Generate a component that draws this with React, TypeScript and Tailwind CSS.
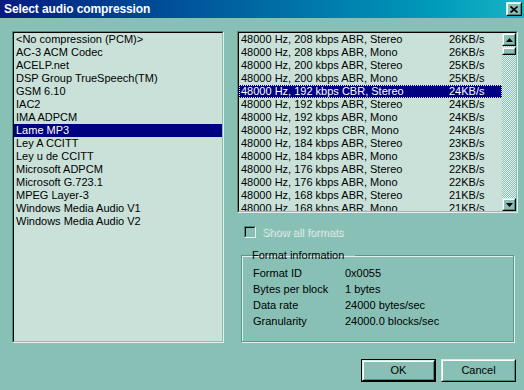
import React from "react";

const codecs = [
  "<No compression (PCM)>",
  "AC-3 ACM Codec",
  "ACELP.net",
  "DSP Group TrueSpeech(TM)",
  "GSM 6.10",
  "IAC2",
  "IMA ADPCM",
  "Lame MP3",
  "Ley A CCITT",
  "Ley u de CCITT",
  "Microsoft ADPCM",
  "Microsoft G.723.1",
  "MPEG Layer-3",
  "Windows Media Audio V1",
  "Windows Media Audio V2",
];

const formats = [
  ["48000 Hz, 208 kbps ABR, Stereo", "26KB/s"],
  ["48000 Hz, 208 kbps ABR, Mono", "26KB/s"],
  ["48000 Hz, 200 kbps ABR, Stereo", "25KB/s"],
  ["48000 Hz, 200 kbps ABR, Mono", "25KB/s"],
  ["48000 Hz, 192 kbps CBR, Stereo", "24KB/s"],
  ["48000 Hz, 192 kbps ABR, Stereo", "24KB/s"],
  ["48000 Hz, 192 kbps ABR, Mono", "24KB/s"],
  ["48000 Hz, 192 kbps CBR, Mono", "24KB/s"],
  ["48000 Hz, 184 kbps ABR, Stereo", "23KB/s"],
  ["48000 Hz, 184 kbps ABR, Mono", "23KB/s"],
  ["48000 Hz, 176 kbps ABR, Stereo", "22KB/s"],
  ["48000 Hz, 176 kbps ABR, Mono", "22KB/s"],
  ["48000 Hz, 168 kbps ABR, Stereo", "21KB/s"],
  ["48000 Hz, 168 kbps ABR, Mono", "21KB/s"],
];

const info = [
  ["Format ID", "0x0055"],
  ["Bytes per block", "1 bytes"],
  ["Data rate", "24000 bytes/sec"],
  ["Granularity", "24000.0 blocks/sec"],
];

// raised 3d edge, win9x style
const Raised = ({ className = "", children }: { className?: string; children?: React.ReactNode }) => (
  <div className={"border border-t-[#d9ece7] border-l-[#d9ece7] border-b-black border-r-black " + className}>
    <div className="w-full h-full border border-t-white border-l-white border-b-[#4f8b81] border-r-[#4f8b81] flex items-center justify-center">
      {children}
    </div>
  </div>
);

const Arrow = ({ down }: { down?: boolean }) => (
  <svg width="7" height="4" viewBox="0 0 7 4">
    <polygon points={down ? "0,0 7,0 3.5,4" : "0,4 7,4 3.5,0"} fill="black" />
  </svg>
);

export default function App() {
  return (
    <div className="w-[524px] h-[390px] overflow-hidden bg-[#88c0b6] text-black text-[11px] font-['Liberation_Sans',Arial,sans-serif] flex flex-col">
      {/* title bar */}
      <div className="h-[18px] flex items-center justify-between pl-[4px] pr-[2px] bg-linear-to-r from-[#081880] to-[#17b4c4]">
        <span className="text-white font-bold text-[12px] tracking-[-0.1px]">Select audio compression</span>
        <Raised className="w-[16px] h-[14px] bg-[#88c0b6]">
          <svg width="8" height="7" viewBox="0 0 8 7">
            <path d="M0.5 0.5 L7.5 6.5 M7.5 0.5 L0.5 6.5" stroke="black" strokeWidth="1.6" />
          </svg>
        </Raised>
      </div>

      <div className="flex pt-[13px] pl-[12px]">
        {/* codec list */}
        <div className="w-[212px] h-[312px] border border-t-[#4f8b81] border-l-[#4f8b81] border-b-[#e2f0ec] border-r-[#e2f0ec]">
          <div className="w-full h-full border border-t-black border-l-black border-b-[#88c0b6] border-r-[#88c0b6] bg-[#c9e1d9] overflow-hidden">
            {codecs.map((c) => (
              <div
                key={c}
                className={
                  "h-[13px] leading-[13px] pl-[2px] whitespace-nowrap " +
                  (c === "Lame MP3" ? "bg-[#000080] text-white" : "")
                }
              >
                {c}
              </div>
            ))}
          </div>
        </div>

        <div className="ml-[13px] w-[281px] flex flex-col">
          {/* format list */}
          <div className="h-[182px] border border-t-[#4f8b81] border-l-[#4f8b81] border-b-[#e2f0ec] border-r-[#e2f0ec]">
            <div className="w-full h-full border border-t-black border-l-black border-b-[#88c0b6] border-r-[#88c0b6] bg-[#c9e1d9] flex overflow-hidden">
              <div className="flex-1 overflow-hidden">
                {formats.map(([f, r], i) => (
                  <div
                    key={f}
                    className={
                      "h-[13px] leading-[11px] flex whitespace-nowrap border " +
                      (i === 4
                        ? "bg-[#000080] text-white border-dotted border-[#f0f080]"
                        : "border-transparent")
                    }
                  >
                    <span className="w-[209px] pl-[1px]">{f}</span>
                    <span>{r}</span>
                  </div>
                ))}
              </div>
              <div className="w-[14px] flex flex-col bg-[repeating-conic-gradient(#e4f2ee_0_25%,#88c0b6_0_50%)] bg-[length:2px_2px]">
                <Raised className="h-[13px] bg-[#88c0b6]">
                  <Arrow />
                </Raised>
                <Raised className="h-[8px] mt-[1px] bg-[#88c0b6]" />
                <div className="flex-1" />
                <Raised className="h-[13px] bg-[#88c0b6]">
                  <Arrow down />
                </Raised>
              </div>
            </div>
          </div>

          {/* show all formats */}
          <div className="flex items-center mt-[13px] ml-[7px] h-[12px]">
            <div className="w-[12px] h-[12px] border border-t-[#4f8b81] border-l-[#4f8b81] border-b-[#e2f0ec] border-r-[#e2f0ec]">
              <div className="w-full h-full border border-t-black border-l-black border-b-[#88c0b6] border-r-[#88c0b6]" />
            </div>
            <span className="ml-[6px] text-[#a2cbc3] [text-shadow:1px_1px_0_#e6f3ef]">Show all formats</span>
          </div>

          {/* format information */}
          <fieldset className="mt-[11px] ml-[4px] w-[273px] h-[93px] border border-[#5b978d] shadow-[1px_1px_0_#e2f0ec,inset_1px_1px_0_#e2f0ec] pl-[11px] pt-[3px]">
            <legend className="px-[1px] ml-[8px] -translate-x-[10px] leading-[13px]">Format information</legend>
            {info.map(([k, v]) => (
              <div key={k} className="flex h-[16px] items-center">
                <span className="w-[92px]">{k}</span>
                <span>{v}</span>
              </div>
            ))}
          </fieldset>

          {/* buttons */}
          <div className="flex mt-[17px] ml-[124px] gap-[5px]">
            <div className="w-[75px] h-[23px] border border-black">
              <Raised className="w-full h-full">OK</Raised>
            </div>
            <Raised className="w-[75px] h-[23px]">Cancel</Raised>
          </div>
        </div>
      </div>
    </div>
  );
}
